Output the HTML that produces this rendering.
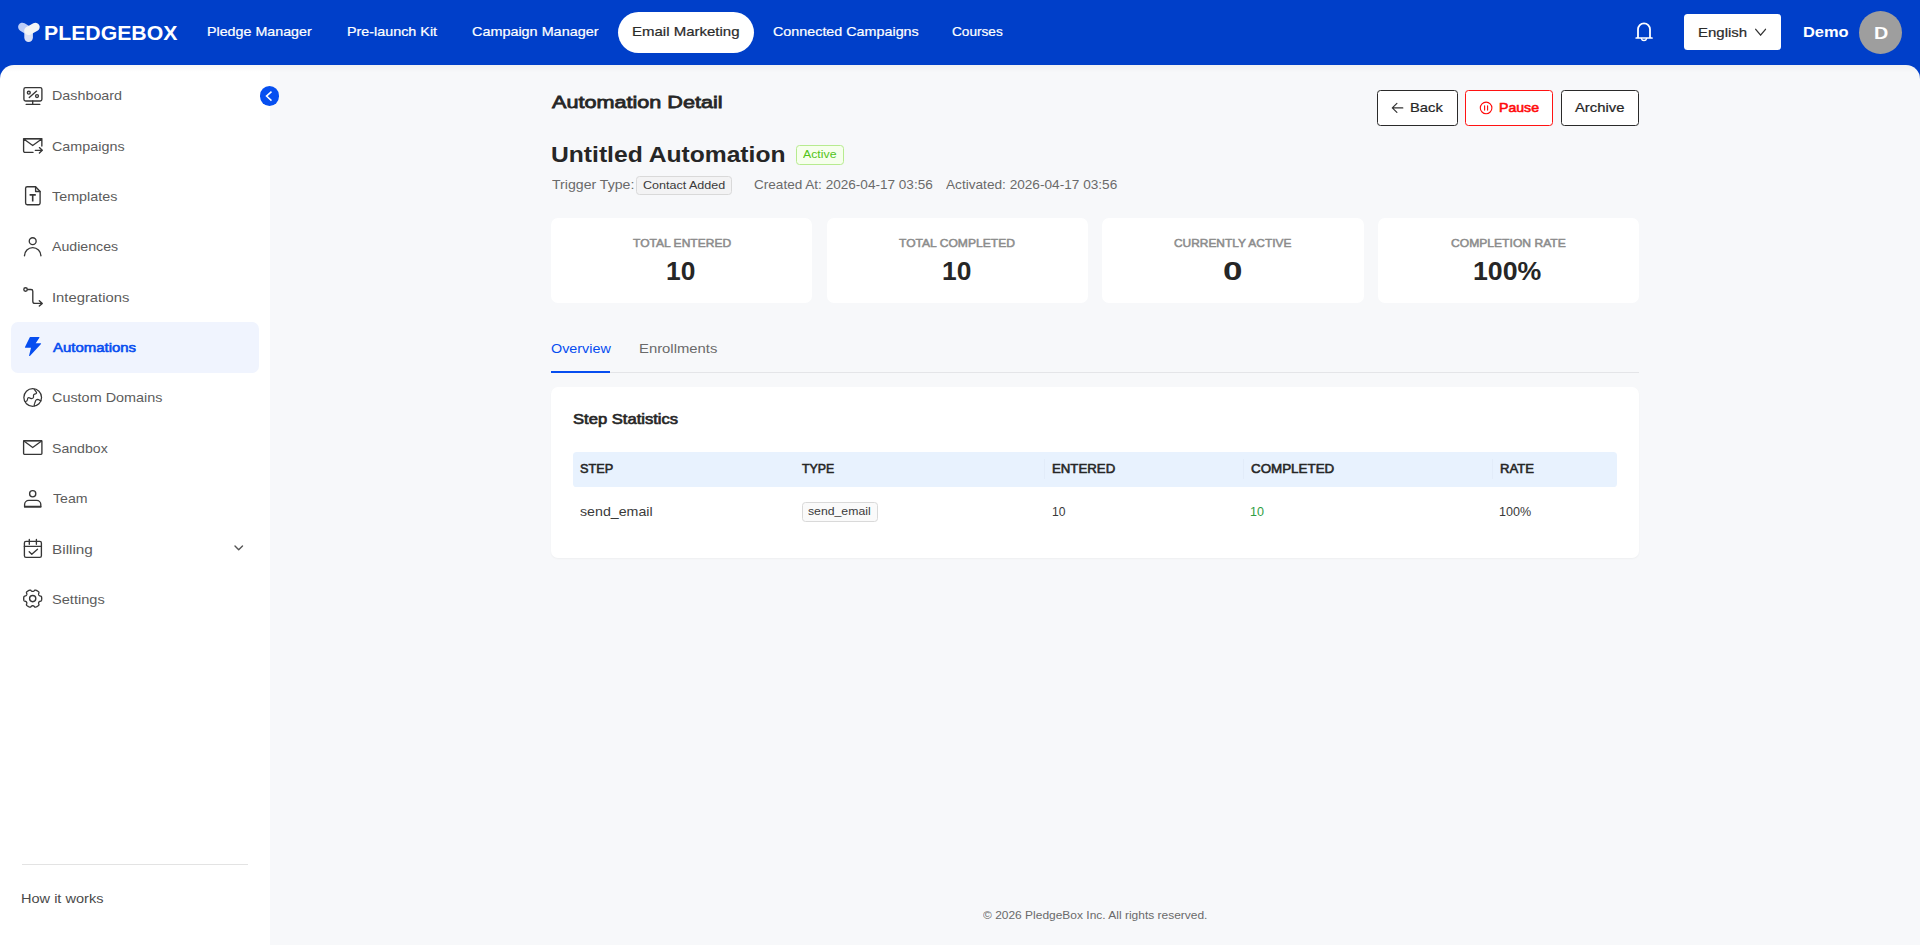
<!DOCTYPE html>
<html lang="en"><head><meta charset="utf-8"><title>Automation Detail - PledgeBox</title>
<style>
html,body{margin:0;padding:0}
body{width:1920px;height:945px;overflow:hidden;background:#003fc9;font-family:'Liberation Sans', sans-serif;position:relative}
.abs{position:absolute;display:block}
.tx{position:absolute;margin:0;padding:0;border:0;white-space:nowrap;line-height:1;transform-origin:0 0;text-align:left;list-style:none;text-decoration:none;font-style:normal}
table{border-collapse:collapse}
.side{left:0;top:65px;width:270px;height:880px;background:linear-gradient(rgba(0,0,0,.035),rgba(0,0,0,0) 7px) #fff;border-top-left-radius:14px}
.main{left:270px;top:65px;width:1650px;height:880px;background:linear-gradient(rgba(0,0,0,.03),rgba(0,0,0,0) 8px) #f7f8fa;border-top-right-radius:14px}
.card{background:#fff;border-radius:7px}
.btn{box-sizing:border-box;border:1px solid #2a2a2a;border-radius:3.5px;background:#fff}
.tag{box-sizing:border-box;border:1px solid #d9d9d9;border-radius:3.5px;background:#fafafa}
</style></head><body>
<header>
<div class="abs" style="left:618px;top:12px;width:136px;height:41px;border-radius:21px;background:#fff"></div>
<div class="abs" style="left:1684px;top:14px;width:97px;height:36px;border-radius:3.5px;background:#fff"></div>
<div class="abs" style="left:1859px;top:10.8px;width:43.2px;height:43.2px;border-radius:50%;background:#9e9e9e"></div>
<svg class="abs" style="left:0;top:0" width="1920" height="65" viewBox="0 0 1920 65" fill="none" stroke-linecap="round" stroke-linejoin="round">
<path d="M28.6 30.7L22.4 27" stroke="#bccdf8" stroke-width="8.6"/>
<path d="M28.6 30.7V37.6" stroke="#dbe1f6" stroke-width="8.6"/>
<path d="M28.6 30.7L35.4 27" stroke="#f5f5f5" stroke-width="8.6"/>
<path d="M1638 38V29.3A6 6 0 0 1 1650 29.3V38" stroke="#fff" stroke-width="1.8" stroke-linecap="butt"/>
<path d="M1636.2 38H1652" stroke="#fff" stroke-width="1.7"/>
<path d="M1641.4 38.6A2.7 2.7 0 0 0 1646.6 38.6" stroke="#fff" stroke-width="1.5"/>
</svg>
<svg class="abs" style="left:1752px;top:24px" width="18" height="16" viewBox="0 0 18 16" fill="none" stroke="#333" stroke-width="1.3" stroke-linecap="round" stroke-linejoin="round"><path d="M3.7 5.3L8.6 11.2L13.5 5.3"/></svg>
<span class="tx" style="left:44.00px;top:23.70px;font-size:19.3px;font-weight:700;color:#ffffff;transform:scaleX(1.1017);">PLEDGEBOX</span>
<nav><a class="tx" style="left:207.27px;top:25.90px;font-size:12.6px;font-weight:400;-webkit-text-stroke:0.20px #ffffff;color:#ffffff;transform:scaleX(1.1329);">Pledge Manager</a><a class="tx" style="left:347.22px;top:25.90px;font-size:12.6px;font-weight:400;-webkit-text-stroke:0.20px #ffffff;color:#ffffff;transform:scaleX(1.1387);">Pre-launch Kit</a><a class="tx" style="left:471.60px;top:25.90px;font-size:12.6px;font-weight:400;-webkit-text-stroke:0.20px #ffffff;color:#ffffff;transform:scaleX(1.1433);">Campaign Manager</a><a class="tx" style="left:632.30px;top:25.90px;font-size:12.6px;font-weight:400;-webkit-text-stroke:0.20px #2b2b2b;color:#2b2b2b;transform:scaleX(1.1913);">Email Marketing</a><a class="tx" style="left:772.61px;top:25.90px;font-size:12.6px;font-weight:400;-webkit-text-stroke:0.20px #ffffff;color:#ffffff;transform:scaleX(1.1375);">Connected Campaigns</a><a class="tx" style="left:952.34px;top:25.90px;font-size:12.6px;font-weight:400;-webkit-text-stroke:0.20px #ffffff;color:#ffffff;transform:scaleX(1.0819);">Courses</a></nav>
<span class="tx" style="left:1698.30px;top:27.00px;font-size:12.6px;font-weight:400;-webkit-text-stroke:0.20px #2b2b2b;color:#2b2b2b;transform:scaleX(1.1915);">English</span><span class="tx" style="left:1802.58px;top:24.90px;font-size:14.4px;font-weight:700;color:#ffffff;transform:scaleX(1.1417);">Demo</span><span class="tx" style="left:1873.72px;top:25.90px;font-size:16px;font-weight:700;color:#ffffff;transform:scaleX(1.2340);">D</span>
</header>
<div class="abs side"></div>
<div class="abs main"></div>
<aside>
<div class="abs" style="left:11px;top:322.1px;width:248px;height:50.8px;border-radius:7px;background:#f0f4fe"></div>
<svg class="abs" style="left:0;top:0" width="270" height="945" viewBox="0 0 270 945" fill="none" stroke="#363636" stroke-width="1.35" stroke-linecap="round" stroke-linejoin="round">
<!-- dashboard -->
<rect x="23.9" y="87.6" width="18" height="13.4" rx="1.7"/><path d="M32.7 101V104.3M26.2 104.4H39.8M29.3 97.5L36.6 91.1"/><circle cx="28.8" cy="92.7" r="1.45"/><circle cx="37" cy="96.1" r="1.45"/>
<!-- campaigns -->
<path d="M33 152.4H25A1.4 1.4 0 0 1 23.6 151V138.9H41.85V146.1M23.8 139L32.7 145.5L41.7 139" stroke-linejoin="miter"/><path d="M24 138.6H41.5" stroke-width="1.35"/><path d="M35.3 150.3H42.2M39.4 147.6L42.3 150.3L39.4 153"/>
<!-- templates -->
<path d="M35.6 186.7H27.2A1.6 1.6 0 0 0 25.6 188.3V203.1A1.6 1.6 0 0 0 27.2 204.7H38.5A1.6 1.6 0 0 0 40.1 203.1V191.5Z"/><path d="M35.6 186.9V191.5H40" /><path d="M29.6 194.9H35.8M32.7 194.9V201.6" stroke-width="1.6" stroke-linecap="butt"/>
<!-- audiences -->
<circle cx="32.7" cy="241.2" r="3.45"/><path d="M24.5 255.8A8.2 8.2 0 0 1 40.9 255.8"/>
<!-- integrations -->
<circle cx="25.55" cy="289.5" r="1.75"/><path d="M27.5 289.5H31A1.8 1.8 0 0 1 32.8 291.3V301.2A2.2 2.2 0 0 0 35 303.4H42M39.3 300.7L42.3 303.4L39.3 306.1"/>
<!-- custom domains -->
<circle cx="32.7" cy="397.5" r="8.85" stroke-width="1.25"/>
<path stroke-width="1.2" d="M34.3 389.3L36.5 392.3Q36.9 393.2 36 393.6L34 394.4Q33.5 394.7 33.5 395.3V397.3Q33.4 398.5 31.6 398.6Q30.3 398.5 29.4 397.7Q28.4 397.3 27.8 398.2Q27.5 398.7 27.5 399.5Q27.5 401.2 25.3 401.6"/>
<path stroke-width="1.2" d="M34.4 405.9Q34 404.5 34.7 403.2L35.6 400.8Q36.2 399.4 37.5 399.3Q38.6 399.4 39.4 400.1L40.9 400.9"/>
<!-- sandbox -->
<rect x="23.6" y="440.8" width="18.3" height="13.6" rx="0.8"/><path d="M23.9 441L32.7 447.5L41.6 441" stroke-linejoin="miter"/><path d="M24 440.6H41.5" stroke-width="1.35"/>
<!-- team -->
<circle cx="32.7" cy="493.8" r="3.1"/><path d="M24.6 506.8V504.6A4.2 4.2 0 0 1 28.8 500.4H36.6A4.2 4.2 0 0 1 40.8 504.6V506.8Z"/><path d="M24.8 506.7H40.6" stroke-width="1.7"/>
<!-- billing -->
<rect x="24.4" y="541.4" width="17" height="16" rx="1.6"/><path d="M24.4 546.4H41.4M29.3 539.5V544.3M36.4 539.5V544.3M29.2 551.8L31.8 554.3L37.5 549.2"/>
<path d="M235 546L238.7 549.8L242.5 546" stroke="#555" stroke-width="1.4"/>
<!-- settings -->
<circle cx="32.7" cy="598.6" r="3.1"/><path d="M41.70 598.60 L41.69 598.99 L41.66 599.38 L41.62 599.77 L41.55 600.16 L41.43 600.54 L41.20 600.88 L40.73 601.13 L40.06 601.28 L39.55 601.44 L39.26 601.66 L39.06 601.91 L38.89 602.18 L38.74 602.45 L38.63 602.75 L38.58 603.11 L38.70 603.63 L38.90 604.29 L38.93 604.83 L38.74 605.20 L38.48 605.48 L38.18 605.74 L37.86 605.97 L37.54 606.19 L37.20 606.39 L36.86 606.58 L36.50 606.76 L36.14 606.91 L35.77 607.04 L35.39 607.13 L34.98 607.10 L34.52 606.82 L34.06 606.31 L33.67 605.95 L33.33 605.81 L33.01 605.76 L32.70 605.75 L32.39 605.76 L32.07 605.81 L31.73 605.95 L31.34 606.31 L30.88 606.82 L30.42 607.10 L30.01 607.13 L29.63 607.04 L29.26 606.91 L28.90 606.76 L28.54 606.58 L28.20 606.39 L27.86 606.19 L27.54 605.97 L27.22 605.74 L26.92 605.48 L26.66 605.20 L26.47 604.83 L26.50 604.29 L26.70 603.63 L26.82 603.11 L26.77 602.75 L26.66 602.45 L26.51 602.18 L26.34 601.91 L26.14 601.66 L25.85 601.44 L25.34 601.28 L24.67 601.13 L24.20 600.88 L23.97 600.54 L23.85 600.16 L23.78 599.77 L23.74 599.38 L23.71 598.99 L23.70 598.60 L23.71 598.21 L23.74 597.82 L23.78 597.43 L23.85 597.04 L23.97 596.66 L24.20 596.32 L24.67 596.07 L25.34 595.92 L25.85 595.76 L26.14 595.54 L26.34 595.29 L26.51 595.02 L26.66 594.75 L26.77 594.45 L26.82 594.09 L26.70 593.57 L26.50 592.91 L26.47 592.37 L26.66 592.00 L26.92 591.72 L27.22 591.46 L27.54 591.23 L27.86 591.01 L28.20 590.81 L28.54 590.62 L28.90 590.44 L29.26 590.29 L29.63 590.16 L30.01 590.07 L30.42 590.10 L30.88 590.38 L31.34 590.89 L31.73 591.25 L32.07 591.39 L32.39 591.44 L32.70 591.45 L33.01 591.44 L33.33 591.39 L33.67 591.25 L34.06 590.89 L34.52 590.38 L34.98 590.10 L35.39 590.07 L35.77 590.16 L36.14 590.29 L36.50 590.44 L36.86 590.62 L37.20 590.81 L37.54 591.01 L37.86 591.23 L38.18 591.46 L38.48 591.72 L38.74 592.00 L38.93 592.37 L38.90 592.91 L38.70 593.57 L38.58 594.09 L38.63 594.45 L38.74 594.75 L38.89 595.02 L39.06 595.29 L39.26 595.54 L39.55 595.76 L40.06 595.92 L40.73 596.07 L41.20 596.32 L41.43 596.66 L41.55 597.04 L41.62 597.43 L41.66 597.82 L41.69 598.21Z"/>
<!-- automations -->
<path d="M30.3 337H39A0.5 0.5 0 0 1 39.4 337.7L35.7 343.3H40.6A0.5 0.5 0 0 1 41 344.1L29.9 356A0.5 0.5 0 0 1 29.1 355.5L31 347.8H25.5A0.5 0.5 0 0 1 25 347.1L29.8 337.3A0.6 0.6 0 0 1 30.3 337Z" fill="#064df0" stroke="none"/>
</svg>
<nav><a class="tx" style="left:52.06px;top:90.00px;font-size:12.6px;font-weight:400;color:#5c5c5c;transform:scaleX(1.1373);">Dashboard</a><a class="tx" style="left:52.41px;top:141.00px;font-size:12.6px;font-weight:400;color:#5c5c5c;transform:scaleX(1.1399);">Campaigns</a><a class="tx" style="left:52.27px;top:191.00px;font-size:12.6px;font-weight:400;color:#5c5c5c;transform:scaleX(1.1393);">Templates</a><a class="tx" style="left:52.43px;top:241.00px;font-size:12.6px;font-weight:400;color:#5c5c5c;transform:scaleX(1.1242);">Audiences</a><a class="tx" style="left:52.13px;top:292.00px;font-size:12.6px;font-weight:400;color:#5c5c5c;transform:scaleX(1.1744);">Integrations</a><a class="tx" style="left:52.68px;top:342.00px;font-size:12.16px;font-weight:400;-webkit-text-stroke:0.55px #064df0;color:#064df0;transform:scaleX(1.2294);">Automations</a><a class="tx" style="left:52.41px;top:392.00px;font-size:12.6px;font-weight:400;color:#5c5c5c;transform:scaleX(1.1438);">Custom Domains</a><a class="tx" style="left:52.33px;top:443.00px;font-size:12.6px;font-weight:400;color:#5c5c5c;transform:scaleX(1.1202);">Sandbox</a><a class="tx" style="left:52.76px;top:493.00px;font-size:12.6px;font-weight:400;color:#5c5c5c;transform:scaleX(1.1221);">Team</a><a class="tx" style="left:51.84px;top:544.00px;font-size:12.6px;font-weight:400;color:#5c5c5c;transform:scaleX(1.2170);">Billing</a><a class="tx" style="left:52.19px;top:594.00px;font-size:12.6px;font-weight:400;color:#5c5c5c;transform:scaleX(1.1587);">Settings</a></nav>
<div class="abs" style="left:259.7px;top:85.8px;width:19.8px;height:19.8px;border-radius:50%;background:#064ff0"></div>
<svg class="abs" style="left:260px;top:85.6px" width="20" height="20" viewBox="0 0 20 20" fill="none" stroke="#fff" stroke-width="1.5" stroke-linecap="butt" stroke-linejoin="miter"><path d="M11.5 5.6L6.5 10.1L11.5 14.6"/></svg>
<div class="abs" style="left:22px;top:864px;width:226px;height:1px;background:#e3e3e3"></div>
<a class="tx" style="left:20.75px;top:892.80px;font-size:12.6px;font-weight:400;color:#4a4a4a;transform:scaleX(1.1550);">How it works</a>
</aside>
<main>
<h1 class="tx" style="left:552.35px;top:94.00px;font-size:17.37px;font-weight:400;-webkit-text-stroke:0.78px #262626;color:#262626;transform:scaleX(1.2448);">Automation Detail</h1>
<div class="abs btn" style="left:1377.2px;top:90px;width:80.6px;height:35.8px"></div>
<div class="abs btn" style="left:1465px;top:90px;width:88px;height:35.8px;border-color:#ff1212"></div>
<div class="abs btn" style="left:1561.2px;top:90px;width:77.6px;height:35.8px"></div>
<svg class="abs" style="left:1390px;top:100px" width="16" height="16" viewBox="0 0 16 16" fill="none" stroke="#333" stroke-width="1.2" stroke-linecap="round" stroke-linejoin="round"><path d="M12.8 7.9H2.4M6.9 3.4L2.3 7.9L6.9 12.4"/></svg>
<svg class="abs" style="left:1478px;top:100px" width="16" height="16" viewBox="0 0 16 16" fill="none" stroke="#ff0a0a" stroke-width="1.1" stroke-linecap="round"><circle cx="8.1" cy="7.9" r="5.8"/><path d="M6.6 5.7V10.1M9.6 5.7V10.1"/></svg>
<span class="tx" style="left:1410.39px;top:101.70px;font-size:12.6px;font-weight:400;-webkit-text-stroke:0.20px #262626;color:#262626;transform:scaleX(1.1704);">Back</span><span class="tx" style="left:1499.27px;top:101.70px;font-size:12.16px;font-weight:400;-webkit-text-stroke:0.55px #ff0a0a;color:#ff0a0a;transform:scaleX(1.1610);">Pause</span><span class="tx" style="left:1575.11px;top:101.70px;font-size:12.6px;font-weight:400;-webkit-text-stroke:0.20px #262626;color:#262626;transform:scaleX(1.1754);">Archive</span>
<h2 class="tx" style="left:550.84px;top:144.00px;font-size:21.6px;font-weight:700;color:#262626;transform:scaleX(1.1412);">Untitled Automation</h2>
<div class="abs tag" style="left:796.2px;top:145.3px;width:47.6px;height:19.4px;border-color:#b7eb8f;background:#f6ffed"></div><span class="tx" style="left:803.04px;top:148.80px;font-size:10.8px;font-weight:400;color:#52c41a;transform:scaleX(1.1380);">Active</span>
<span class="tx" style="left:551.61px;top:179.20px;font-size:12.6px;font-weight:400;color:#6a6a6a;transform:scaleX(1.1208);">Trigger Type:</span>
<div class="abs tag" style="left:636.3px;top:176.3px;width:95.4px;height:19.2px;background:#f3f3f4"></div><span class="tx" style="left:643.47px;top:180.20px;font-size:10.8px;font-weight:400;color:#3a3a3a;transform:scaleX(1.1603);">Contact Added</span>
<span class="tx" style="left:753.60px;top:179.00px;font-size:12.6px;font-weight:400;color:#6a6a6a;transform:scaleX(1.0774);">Created At: 2026-04-17 03:56</span><span class="tx" style="left:946.35px;top:179.00px;font-size:12.6px;font-weight:400;color:#6a6a6a;transform:scaleX(1.0822);">Activated: 2026-04-17 03:56</span>
<section class="abs card" style="left:551.2px;top:218px;width:261.2px;height:85px"></section><span class="tx" style="left:632.98px;top:238.00px;font-size:11.29px;font-weight:400;-webkit-text-stroke:0.51px #8c8c8c;color:#8c8c8c;transform:scaleX(1.0677);">TOTAL ENTERED</span><span class="tx" style="left:666.42px;top:259.00px;font-size:25.2px;font-weight:700;color:#262626;transform:scaleX(1.0469);">10</span><section class="abs card" style="left:826.8px;top:218px;width:261.2px;height:85px"></section><span class="tx" style="left:899.43px;top:238.00px;font-size:11.29px;font-weight:400;-webkit-text-stroke:0.51px #8c8c8c;color:#8c8c8c;transform:scaleX(1.0714);">TOTAL COMPLETED</span><span class="tx" style="left:942.16px;top:259.00px;font-size:25.2px;font-weight:700;color:#262626;transform:scaleX(1.0469);">10</span><section class="abs card" style="left:1102.4px;top:218px;width:261.2px;height:85px"></section><span class="tx" style="left:1173.80px;top:238.00px;font-size:11.29px;font-weight:400;-webkit-text-stroke:0.51px #8c8c8c;color:#8c8c8c;transform:scaleX(1.0560);">CURRENTLY ACTIVE</span><span class="tx" style="left:1222.72px;top:259.00px;font-size:25.2px;font-weight:700;color:#262626;transform:scaleX(1.3900);">0</span><section class="abs card" style="left:1378.0px;top:218px;width:261.2px;height:85px"></section><span class="tx" style="left:1450.72px;top:238.00px;font-size:11.29px;font-weight:400;-webkit-text-stroke:0.51px #8c8c8c;color:#8c8c8c;transform:scaleX(1.0730);">COMPLETION RATE</span><span class="tx" style="left:1473.30px;top:259.00px;font-size:25.2px;font-weight:700;color:#262626;transform:scaleX(1.0610);">100%</span>
<a class="tx" style="left:550.99px;top:343.00px;font-size:12.6px;font-weight:400;color:#064df0;transform:scaleX(1.1394);">Overview</a><a class="tx" style="left:638.69px;top:343.00px;font-size:12.6px;font-weight:400;color:#6a6a6a;transform:scaleX(1.1786);">Enrollments</a>
<div class="abs" style="left:551.2px;top:372px;width:1087.8px;height:1px;background:#e4e5e8"></div>
<div class="abs" style="left:551.2px;top:371.2px;width:59px;height:2px;background:#064df0"></div>
<section class="abs card" style="left:551.2px;top:387px;width:1087.8px;height:171px;box-shadow:0 1px 2px rgba(0,0,0,.04)"></section>
<h3 class="tx" style="left:572.85px;top:413.00px;font-size:13.9px;font-weight:400;-webkit-text-stroke:0.63px #262626;color:#262626;transform:scaleX(1.1948);">Step Statistics</h3>
<div class="abs" style="left:572.9px;top:452px;width:1043.8px;height:34.6px;border-radius:3.6px;background:#e8f2fe"></div>
<i class="abs" style="left:1044px;top:459px;width:1px;height:20px;background:#e2ecf9"></i><i class="abs" style="left:1242.5px;top:459px;width:1px;height:20px;background:#e2ecf9"></i><i class="abs" style="left:1491.5px;top:459px;width:1px;height:20px;background:#e2ecf9"></i>
<div class="abs tag" style="left:802px;top:502px;width:75.7px;height:20px"></div>
<table><thead><tr><th class="tx" style="left:580.32px;top:463.00px;font-size:12.16px;font-weight:400;-webkit-text-stroke:0.55px #262626;color:#262626;transform:scaleX(1.0449);">STEP</th><th class="tx" style="left:802.43px;top:463.00px;font-size:12.16px;font-weight:400;-webkit-text-stroke:0.55px #262626;color:#262626;transform:scaleX(1.0156);">TYPE</th><th class="tx" style="left:1052.45px;top:463.00px;font-size:12.16px;font-weight:400;-webkit-text-stroke:0.55px #262626;color:#262626;transform:scaleX(1.0877);">ENTERED</th><th class="tx" style="left:1250.56px;top:463.00px;font-size:12.16px;font-weight:400;-webkit-text-stroke:0.55px #262626;color:#262626;transform:scaleX(1.1001);">COMPLETED</th><th class="tx" style="left:1499.66px;top:463.00px;font-size:12.16px;font-weight:400;-webkit-text-stroke:0.55px #262626;color:#262626;transform:scaleX(1.0803);">RATE</th></tr></thead><tbody><tr><td class="tx" style="left:580.22px;top:506.00px;font-size:12.6px;font-weight:400;color:#3a3a3a;transform:scaleX(1.1276);">send_email</td><td class="tx" style="left:808.32px;top:505.80px;font-size:10.8px;font-weight:400;color:#3a3a3a;transform:scaleX(1.1343);">send_email</td><td class="tx" style="left:1052.17px;top:506.00px;font-size:12.6px;font-weight:400;color:#3a3a3a;transform:scaleX(0.9632);">10</td><td class="tx" style="left:1250.02px;top:506.00px;font-size:12.6px;font-weight:400;color:#2f9e44;transform:scaleX(0.9959);">10</td><td class="tx" style="left:1499.21px;top:506.00px;font-size:12.6px;font-weight:400;color:#3a3a3a;transform:scaleX(0.9970);">100%</td></tr></tbody></table>
</main>
<footer><span class="tx" style="left:983.22px;top:909.80px;font-size:10.8px;font-weight:400;color:#6a6a6a;transform:scaleX(1.1087);">© 2026 PledgeBox Inc. All rights reserved.</span></footer>
</body></html>
